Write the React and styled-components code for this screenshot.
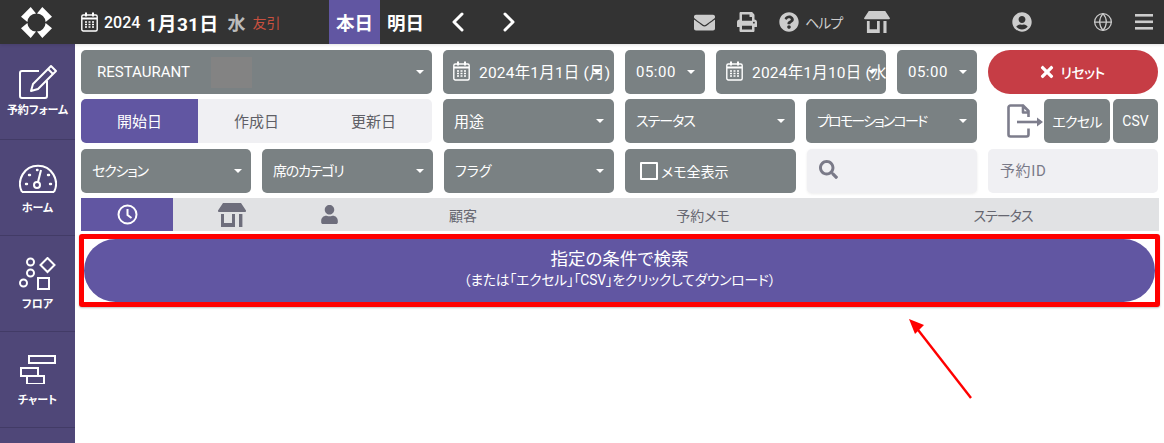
import React from "react";
import styled, { createGlobalStyle } from "styled-components";
import { FaEnvelope, FaPrint, FaQuestionCircle, FaUserCircle, FaSearch, FaTimes, FaUser } from "react-icons/fa";
import { FiGlobe } from "react-icons/fi";

const Global = createGlobalStyle`
  html, body { margin: 0; padding: 0; background: #fff; }
  body { font-family: Roboto, "Noto Sans CJK JP", sans-serif; font-feature-settings: "palt"; }
  * { box-sizing: border-box; }
`;

const Page = styled.div`width: 1164px; height: 443px; overflow: hidden; position: relative; background: #fff;`;
const Header = styled.header`height: 44px; background: #333; display: flex; align-items: center; color: #fff; box-shadow: 0 1px 3px rgba(0,0,0,.12); position: relative;`;
const LogoBox = styled.div`width: 73px; display: flex; justify-content: center; align-items: center;`;
const DateBlock = styled.div`width: 256px; padding-left: 8px; display: flex; align-items: center; white-space: nowrap;`;
const Year = styled.span`font-size: 16px; margin: 0 6px; font-weight: 500;`;
const Day = styled.span`font-size: 19px; font-weight: 700; letter-spacing: .3px;`;
const Dow = styled.span`font-size: 18px; font-weight: 700; color: #bbb; margin-left: 9px;`;
const Rokuyo = styled.span`font-size: 14px; color: #c9503f; margin-left: 7px; letter-spacing: 0;`;
const DayTab = styled.div`
  width: 51px; height: 44px; display: flex; align-items: center; justify-content: center;
  font-size: 18.5px; font-weight: 700; background: ${p => (p.$active ? "#6156a2" : "transparent")};
`;
const Arrows = styled.div`width: 103px; display: flex; padding-left: 21px; gap: 39px;`;
const Tools = styled.div`display: flex; align-items: center; color: #ccc; margin-left: 160px; gap: 22px;`;
const Help = styled.span`display: flex; align-items: center; gap: 6px; font-size: 14px; letter-spacing: -1px; font-weight: 400;`;
const Right = styled.div`display: flex; align-items: center; color: #ccc; margin-left: auto; padding-right: 10px;`;

const Body = styled.div`display: flex; height: 399px;`;
const Side = styled.nav`width: 75px; background: #4f4778; flex: none; color: #fff;`;
const SideItem = styled.div`
  height: 96px; border-bottom: 1px solid #423b66; display: flex; flex-direction: column; align-items: center;
  padding-top: ${p => p.$top || 20}px; font-size: 11px; font-weight: 700;
  svg { display: block; margin-bottom: ${p => p.$gap ?? 4}px; }
`;
const Main = styled.main`flex: 1; padding: 6px 6px 0 6px; display: flex; flex-direction: column; position: relative;`;
const Row = styled.div`display: flex; height: 44px; margin-bottom: ${p => p.$mb ?? 5}px;`;
const Gray = styled.div`
  position: relative; flex: none; width: ${p => p.$w}px; margin-left: ${p => p.$ml || 0}px; height: 44px; background: #7a8183; color: #fff;
  border-radius: 5px; display: flex; align-items: center; padding-left: ${p => p.$pl ?? 11}px; padding-bottom: ${p => p.$pb ?? 2}px; font-size: ${p => p.$fs || 14}px;
  letter-spacing: ${p => p.$ls || 0}px; white-space: nowrap; overflow: hidden;
  svg { flex: none; }
`;
const Caret = styled.i`
  position: absolute; right: ${p => p.$r ?? 10}px; top: ${p => p.$t ?? 20}px; width: 0; height: 0;
  border-left: 4px solid transparent; border-right: 4px solid transparent; border-top: 4px solid #fff;
`;
const Blur = styled.span`width: 41px; height: 31px; background: #838383; margin-left: 21px;`;
const DateText = styled.span`margin-left: 9px;`;
const Reset = styled.div`
  width: 170px; margin-left: 11px; height: 44px; border-radius: 22px; background: #c63d45; color: #fff;
  display: flex; align-items: center; justify-content: center; gap: 4px; padding-right: 3px; font-size: 14px; font-weight: 500; letter-spacing: -.6px;
`;
const Segments = styled.div`width: 351px; height: 44px; background: #f0f0f3; border-radius: 5px; display: flex; overflow: hidden; color: #5f5f66; font-size: 15px;`;
const Segment = styled.div`
  flex: 1; display: flex; align-items: center; justify-content: center; padding-bottom: 2px;
  ${p => p.$active && "background: #6156a2; color: #fff;"}
`;
const Export = styled.div`display: flex; align-items: center; width: 37px; margin-left: 30px;`;
const Btn = styled.div`
  flex: none; width: ${p => p.$w}px; margin-left: ${p => p.$ml || 0}px; height: 44px; border-radius: 5px; background: #7a8183; color: #fff;
  display: flex; align-items: center; justify-content: center; font-size: ${p => p.$fs || 14}px; letter-spacing: ${p => p.$ls || 0}px;
`;
const Check = styled.span`width: 18px; height: 18px; border: 2px solid #fff; margin-right: 3px; border-radius: 1px;`;
const Light = styled.div`
  flex: none; width: 170px; height: 44px; margin-left: ${p => p.$ml}px; background: #f0f0f3; border-radius: 5px; display: flex; align-items: center;
  color: #7a7a88; padding: 0 0 3px 12px; font-size: 15px; letter-spacing: .6px;
  ${p => p.$shadow && "box-shadow: 0 1px 3px rgba(0,0,0,.08);"}
`;
const TableHead = styled.div`height: 33px; width: 1078px; background: #e1e2e4; display: flex; align-items: center; color: #666670; font-size: 14px;`;
const Col = styled.div`
  flex: none; width: ${p => p.$w}px; height: 33px; display: flex; align-items: center; justify-content: center; letter-spacing: ${p => p.$ls || 0}px;
  ${p => p.$active && "background: #6156a2; color: #fff;"}
`;
const Frame = styled.div`
  margin: 3px 0 0 -2px; width: 1081px; height: 73px; border: 5px solid #f00; border-radius: 3px; background: #fff; box-shadow: 0 1px 2px rgba(0,0,0,.25);
`;
const Search = styled.div`
  height: 63px; background: #6156a2; border-radius: 32px; color: #fff; display: flex; flex-direction: column; align-items: center; justify-content: center; padding-bottom: 3px;
`;
const SearchTitle = styled.div`font-size: 17.5px; line-height: 22px;`;
const SearchSub = styled.div`font-size: 13.8px; line-height: 20px; letter-spacing: -.2px;`;
const Annotation = styled.svg`position: absolute; left: 0; top: 0; pointer-events: none;`;

const Store = ({ w = 26, h = 22, color = "currentColor" }) => (
  <svg width={w} height={h} viewBox="0 0 28 24" fill={color}>
    <path d="M5 0h18l5 7.500a1 1 0 0 1-1 1.500H1a1 1 0 0 1-1-1.500z" />
    <path d="M3 11h3v9h8v-9h3v13H3zM21 11h3.400v13H21z" />
  </svg>
);
const Calendar = ({ color = "#fff" }) => (
  <svg width="17" height="20" viewBox="0 0 17 20" fill="none" stroke={color} strokeWidth="1.400">
    <rect x=".8" y="3" width="15.400" height="16" rx="1.500" />
    <path d="M1 6.500h15" strokeWidth="2" />
    <path d="M5 .5v4M12 .5v4" strokeWidth="2" />
    <path d="M4 10h9M4 12.500h9M4 15h9" strokeDasharray="2 1.500" strokeWidth="1.400" />
  </svg>
);
const Chevron = ({ dir }) => (
  <svg width="12" height="20" viewBox="0 0 12 20" fill="none" stroke="#fff" strokeWidth="3" strokeLinecap="round" strokeLinejoin="round">
    <path d={dir === "left" ? "M10 2L2 10l8 8" : "M2 2l8 8-8 8"} />
  </svg>
);
const corner = "M0 10L10 0l5.500 6.600A9.500 9.500 0 0 0 6.600 15.500z";
const Logo = () => (
  <svg width="31" height="31" viewBox="0 0 32 32" fill="#fff">
    <path d={corner} />
    <path d={corner} transform="rotate(90 16 16)" />
    <path d={corner} transform="rotate(180 16 16)" />
    <path d={corner} transform="rotate(270 16 16)" />
  </svg>
);
const Edit = () => (
  <svg width="40" height="36" viewBox="0 0 40 36" fill="none" stroke="#fff" strokeWidth="2" strokeLinejoin="round">
    <path d="M21 7H4a2 2 0 0 0-2 2v23a2 2 0 0 0 2 2h23a2 2 0 0 0 2-2V17" />
    <path d="M33 2l5 5-18 18-7 2 2-7z" />
    <path d="M30 5l5 5" />
  </svg>
);
const Gauge = () => (
  <svg width="38" height="30" viewBox="0 0 38 30" fill="none" stroke="#fff" strokeWidth="2">
    <path d="M3 29A18 18 0 1 1 35 29" />
    <path d="M3 29h32" />
    <circle cx="18" cy="22" r="3" />
    <path d="M19 19l3-12" />
    <path d="M7 21h1M10 12h1M18 7h.5M29 12h1M31 21h1" strokeWidth="2.400" strokeLinecap="round" />
  </svg>
);
const Shapes = () => (
  <svg width="38" height="34" viewBox="0 0 38 34" fill="none" stroke="#fff" strokeWidth="2">
    <circle cx="11.500" cy="5" r="3.500" />
    <circle cx="11.500" cy="16" r="3.500" />
    <circle cx="4.500" cy="26" r="3.500" />
    <path d="M28.500 1l7 7-7 7-7-7z" />
    <rect x="19" y="21" width="11" height="11" />
  </svg>
);
const Gantt = () => (
  <svg width="36" height="30" viewBox="0 0 36 30" fill="none" stroke="#fff" strokeWidth="2">
    <rect x="9" y="2" width="26" height="7" />
    <rect x="1" y="14" width="17" height="8" />
    <rect x="7" y="22" width="17" height="8" />
  </svg>
);
const FileOut = () => (
  <svg width="37" height="34" viewBox="0 0 37 34" fill="none" stroke="#7d7d8c" strokeWidth="2.600" strokeLinejoin="round">
    <path d="M16 1.500H3.500a2 2 0 0 0-2 2v27a2 2 0 0 0 2 2h16a2 2 0 0 0 2-2v-6M21.500 13V7l-5.500-5.500v7h5.500" />
    <path d="M10 18h24" />
    <path d="M30 13.500l6 4.500-6 4.500z" fill="#7d7d8c" stroke="none" />
  </svg>
);

export default function App() {
  return (
    <Page>
      <Global />
      <Header>
        <LogoBox><Logo /></LogoBox>
        <DateBlock>
          <Calendar />
          <Year>2024</Year>
          <Day>1月31日</Day>
          <Dow>水</Dow>
          <Rokuyo>友引</Rokuyo>
        </DateBlock>
        <DayTab $active>本日</DayTab>
        <DayTab>明日</DayTab>
        <Arrows><Chevron dir="left" /><Chevron dir="right" /></Arrows>
        <Tools>
          <FaEnvelope size={21} />
          <FaPrint size={20} />
          <Help><FaQuestionCircle size={20} />ヘルプ</Help>
          <Store />
        </Tools>
        <Right>
          <FaUserCircle size={20} />
          <FiGlobe size={20} style={{ marginLeft: 61 }} strokeWidth={1.5} />
          <svg width="20" height="16" viewBox="0 0 20 16" fill="#ccc" style={{ marginLeft: 21 }}>
            <rect x="1" width="18" height="2.600" /><rect x="1" y="6.500" width="18" height="2.600" /><rect x="1" y="13" width="18" height="2.600" />
          </svg>
        </Right>
      </Header>
      <Body>
        <Side>
          <SideItem $top={20} $gap={1}><Edit />予約フォーム</SideItem>
          <SideItem $top={23} $gap={6}><Gauge />ホーム</SideItem>
          <SideItem $top={21}><Shapes />フロア</SideItem>
          <SideItem $top={22} $gap={7}><Gantt />チャート</SideItem>
        </Side>
        <Main>
          <Row>
            <Gray $w={351} $pl={16} $fs={15} $pb={0}>RESTAURANT<Blur /><Caret $r={8} /></Gray>
            <Gray $w={171} $ml={11} $pl={10} $fs={15.5} $ls={.2}><Calendar /><DateText>2024年1月1日 (月)</DateText><Caret $r={13} /></Gray>
            <Gray $w={80} $ml={11} $fs={15} $ls={.5} $pb={0}>05:00<Caret /></Gray>
            <Gray $w={170} $ml={11} $pl={10} $fs={15.5} $ls={.2}><Calendar /><DateText>2024年1月10日 (水)</DateText><Caret $r={10} /></Gray>
            <Gray $w={80} $ml={11} $fs={15} $ls={.5} $pb={0}>05:00<Caret /></Gray>
            <Reset><FaTimes size={18} />リセット</Reset>
          </Row>
          <Row $mb={6}>
            <Segments>
              <Segment $active>開始日</Segment>
              <Segment>作成日</Segment>
              <Segment>更新日</Segment>
            </Segments>
            <Gray $w={171} $ml={11} $fs={15}>用途<Caret /></Gray>
            <Gray $w={170} $ml={11} $ls={-1}>ステータス<Caret /></Gray>
            <Gray $w={171} $ml={11} $ls={-1.8}>プロモーションコード<Caret /></Gray>
            <Export><FileOut /></Export>
            <Btn $w={66} $ls={-.7}>エクセル</Btn>
            <Btn $w={45} $ml={3} $fs={14}>CSV</Btn>
          </Row>
          <Row>
            <Gray $w={170} $ls={-1.2}>セクション<Caret $r={9} /></Gray>
            <Gray $w={171} $ml={11} $ls={-1.2}>席のカテゴリ<Caret $r={9} /></Gray>
            <Gray $w={170} $ml={11}>フラグ<Caret /></Gray>
            <Gray $w={171} $ml={11} $pl={15} $pb={0}><Check />メモ全表示</Gray>
            <Light $ml={11} $shadow><FaSearch size={19} /></Light>
            <Light $ml={11}>予約ID</Light>
          </Row>
          <TableHead>
            <Col $w={92} $active>
              <svg width="21" height="21" viewBox="0 0 21 21" fill="none" stroke="#fff" strokeWidth="2"><circle cx="10.500" cy="10.500" r="9" /><path d="M10.500 5v6l4 3" /></svg>
            </Col>
            <Col $w={118}><Store w={28} h={24} color="#6e6e7c" /></Col>
            <Col $w={76}><FaUser size={19} color="#6e6e7c" /></Col>
            <Col $w={192}>顧客</Col>
            <Col $w={288}>予約メモ</Col>
            <Col $w={312} $ls={-1}>ステータス</Col>
          </TableHead>
          <Frame>
            <Search>
              <SearchTitle>指定の条件で検索</SearchTitle>
              <SearchSub>（または「エクセル」「CSV」をクリックしてダウンロード）</SearchSub>
            </Search>
          </Frame>
          <Annotation width="1089" height="399" viewBox="75 44 1089 399">
            <path d="M971 398L915 326" stroke="#f00" strokeWidth="2.400" />
            <path d="M909 319l15 6-9 9z" fill="#f00" />
          </Annotation>
        </Main>
      </Body>
    </Page>
  );
}
